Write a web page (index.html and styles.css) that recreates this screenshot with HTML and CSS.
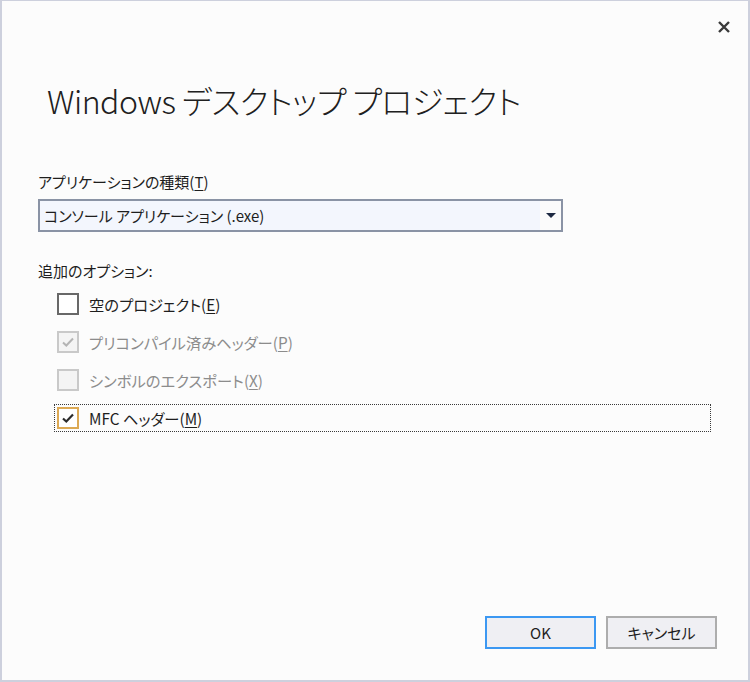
FILE: index.html
```html
<!DOCTYPE html>
<html lang="ja">
<head>
<meta charset="utf-8">
<title>Windows デスクトップ プロジェクト</title>
<link rel="stylesheet" href="styles.css">
</head>
<body>
<div class="dialog">
  <div class="topbar">
    <button class="close" aria-label="閉じる">
      <svg width="14" height="14" viewBox="0 0 14 14"><path d="M2 2 L12 12 M12 2 L2 12" stroke="#3a3a3a" stroke-width="2.4" fill="none"/></svg>
    </button>
  </div>
  <h1 class="title">Windows デスクトップ プロジェクト</h1>
  <div class="field">
    <div class="label">アプリケーションの種類(<u>T</u>)</div>
    <div class="select">
      <span class="select-text">コンソール アプリケーション (.exe)</span>
      <span class="select-arrow"><svg width="10" height="6" viewBox="0 0 10 6"><path d="M0 0 H10 L5 5 Z" fill="#1d2942"/></svg></span>
    </div>
  </div>
  <div class="options">
    <div class="label">追加のオプション:</div>
    <div class="checks">
      <div class="check">
        <span class="box"></span>
        <span class="check-label">空のプロジェクト(<u>E</u>)</span>
      </div>
      <div class="check disabled">
        <span class="box"><svg width="16" height="16" viewBox="0 0 16 16"><path d="M3 8.5 L6.3 11.5 L13 4.5" stroke="#b4b4b4" stroke-width="2" fill="none"/></svg></span>
        <span class="check-label">プリコンパイル済みヘッダー(<u>P</u>)</span>
      </div>
      <div class="check disabled">
        <span class="box"></span>
        <span class="check-label">シンボルのエクスポート(<u>X</u>)</span>
      </div>
      <div class="check focused">
        <span class="box"><svg width="16" height="16" viewBox="0 0 16 16"><path d="M3 8.5 L6.3 11.5 L13 4.5" stroke="#2b2b2b" stroke-width="2.2" fill="none"/></svg></span>
        <span class="check-label">MFC ヘッダー(<u>M</u>)</span>
      </div>
    </div>
  </div>
  <div class="spacer"></div>
  <div class="buttons">
    <button class="btn primary">OK</button>
    <button class="btn">キャンセル</button>
  </div>
</div>
</body>
</html>
```

FILE: styles.css
```css
* { box-sizing: border-box; }
html, body { margin: 0; padding: 0; }
body {
  width: 750px;
  height: 682px;
  font-family: "Noto Sans CJK JP", "Noto Sans", sans-serif;
  font-feature-settings: "palt";
  color: #1e1e1e;
  background: #fcfcfc;
}
.dialog {
  width: 750px;
  height: 682px;
  border-style: solid;
  border-color: #cdd0dd;
  border-width: 1px 2px 2px 2px;
  background: #fcfcfc;
  display: flex;
  flex-direction: column;
  padding: 0 31px 31px 36px;
}
.topbar {
  display: flex;
  justify-content: flex-end;
  padding-top: 18px;
  margin-right: -15px;
  height: 40px;
}
.close {
  border: none;
  background: transparent;
  padding: 0;
  width: 16px;
  height: 16px;
  display: flex;
  align-items: center;
  justify-content: center;
}
.title {
  margin: 37px 0 0 9px;
  font-size: 32px;
  font-weight: 300;
  line-height: 44px;
  color: #202020;
  letter-spacing: -0.5px;
}
.field { margin-top: 49px; }
.label {
  font-size: 15px;
  line-height: 22px;
  color: #1e1e1e;
}
u { text-decoration-thickness: 1px; text-underline-offset: 2px; }
.select {
  margin-top: 6px;
  width: 525px;
  height: 33px;
  border: 2px solid #8a93a5;
  display: flex;
  align-items: stretch;
  background: #f3f6fd;
}
.select-text {
  flex: 1;
  padding-left: 4px;
  font-size: 15px;
  line-height: 29px;
  color: #1e1e1e;
}
.select-arrow {
  width: 21px;
  background: #fbfbfb;
  display: flex;
  align-items: center;
  justify-content: center;
}
.options { margin-top: 28px; }
.checks {
  display: flex;
  flex-direction: column;
  gap: 14px;
  margin-top: 10px;
  margin-left: 19px;
}
.check {
  display: flex;
  align-items: center;
  gap: 10px;
  height: 24px;
  width: 653px;
}
.box {
  width: 22px;
  height: 22px;
  border: 2px solid #686868;
  background: #ffffff;
  display: flex;
  align-items: center;
  justify-content: center;
  flex: none;
}
.check-label { font-size: 15.3px; line-height: 22px; }
.check.disabled .box { border-color: #c9c9c9; background: #f4f4f4; }
.check.disabled .check-label { color: #8c8c8c; }
.check.focused {
  outline: 1px dotted #3a3a3a;
  outline-offset: 1px;
  margin-left: -1px;
  padding-left: 1px;
}
.check.focused .box { border-color: #dca954; }
.spacer { flex: 1; }
.buttons {
  display: flex;
  justify-content: flex-end;
  gap: 10px;
}
.btn {
  width: 111px;
  height: 33px;
  border: 2px solid #adadad;
  background: #efeff3;
  font-family: "Noto Sans CJK JP", "Noto Sans", sans-serif;
  font-feature-settings: "palt";
  font-size: 15px;
  color: #1e1e1e;
  padding: 0;
}
.btn.primary { border-color: #3c98f2; }
```
